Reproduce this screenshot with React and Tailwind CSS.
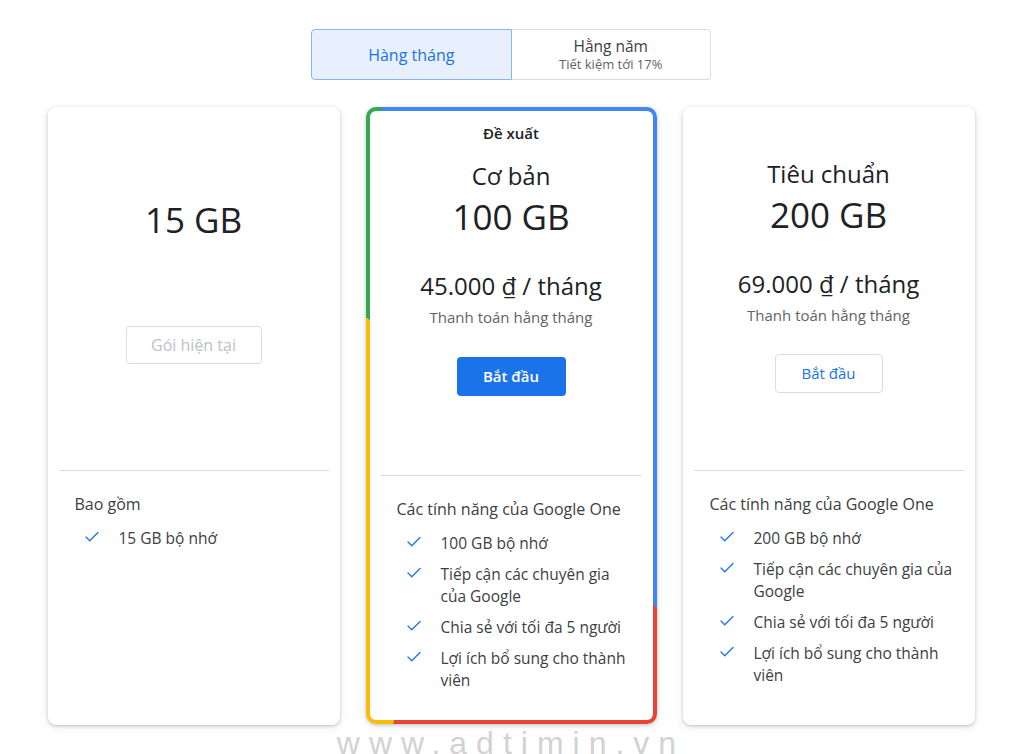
import React, { useState } from 'react'
import { Check } from 'lucide-react'

const plans = {
    basic: {
        name: 'Cơ bản',
        size: '100 GB',
        price: '45.000 ₫ / tháng',
        features: ['100 GB bộ nhớ', 'Tiếp cận các chuyên gia của Google', 'Chia sẻ với tối đa 5 người', 'Lợi ích bổ sung cho thành viên'],
    },
    standard: {
        name: 'Tiêu chuẩn',
        size: '200 GB',
        price: '69.000 ₫ / tháng',
        features: ['200 GB bộ nhớ', 'Tiếp cận các chuyên gia của Google', 'Chia sẻ với tối đa 5 người', 'Lợi ích bổ sung cho thành viên'],
    },
}

const FeatureList = ({ title, items }) => (
    <div className="border-t border-[#dadce0] pl-4 pr-[8px] pt-[23px]">
        <p className="text-[16px] leading-[20px] text-[#3c4043]">{title}</p>
        <ul className="mt-[13px] flex flex-col gap-[9px] pl-[8px]">
            {items.map((item, i) => (
                <li key={`f-${i}`} className="flex items-start gap-[18px]">
                    <Check size={18} strokeWidth={1.7} className="mt-[1px] shrink-0 text-[#1a73e8]" />
                    <span className="text-[15.5px] leading-[22px] text-[#3c4043]">{item}</span>
                </li>
            ))}
        </ul>
    </div>
)

const PlanTop = ({ plan, primary }) => (
    <>
        <h2 className="text-[24px] leading-[28px] text-[#202124]">{plan.name}</h2>
        <p className="mt-[5px] text-[35px] leading-[44px] text-[#202124]">{plan.size}</p>
        <p className="mt-[32px] text-[24px] leading-[30px] text-[#202124]">{plan.price}</p>
        <p className="mt-[6px] text-[15px] leading-[20px] text-[#5f6368]">Thanh toán hằng tháng</p>
        {primary ? (
            <button className="mt-[30px] h-[39px] w-[109px] rounded-[4px] bg-[#1a73e8] text-[15px] font-semibold text-white">
                Bắt đầu
            </button>
        ) : (
            <button className="mt-[29px] h-[39px] w-[108px] rounded-[4px] border border-[#dadce0] bg-white text-[15px] font-medium text-[#1a73e8]">
                Bắt đầu
            </button>
        )}
    </>
)

const cardShadow = 'shadow-[0_1px_3px_rgba(60,64,67,0.25),0_2px_8px_rgba(60,64,67,0.12)]'

const App = () => {
    const [period, setPeriod] = useState('month')

    return (
        <div className="min-h-screen bg-white font-['Open_Sans',sans-serif]">
            <div className="flex flex-col items-center pl-[6px] pt-[29px]">
                {/* period toggle */}
                <div className="flex h-[51px] w-[400px]">
                    <button
                        onClick={() => setPeriod('month')}
                        className={period === 'month'
                            ? 'flex-1 rounded-l-[4px] border border-[#8ab4f8] bg-[#e8f0fe] text-[16px] font-medium text-[#1a73e8]'
                            : 'flex-1 rounded-l-[4px] border border-[#dadce0] bg-white text-[16px] text-[#3c4043]'}
                    >
                        Hàng tháng
                    </button>
                    <button
                        onClick={() => setPeriod('year')}
                        className="flex flex-1 flex-col items-center justify-center rounded-r-[4px] border border-l-0 border-[#dadce0] bg-white"
                    >
                        <span className="text-[15.5px] leading-[19px] text-[#3c4043]">Hằng năm</span>
                        <span className="text-[13px] leading-[17px] text-[#5f6368]">Tiết kiệm tới 17%</span>
                    </button>
                </div>

                <div className="mt-[27px] flex items-start gap-[26px]">
                    {/* current plan */}
                    <div className={`flex h-[618px] w-[292px] flex-col rounded-[8px] bg-white px-[11px] ${cardShadow}`}>
                        <div className="flex h-[363px] flex-col items-center">
                            <p className="mt-[91px] text-[35px] leading-[44px] text-[#202124]">15 GB</p>
                            <button disabled className="mt-[84px] h-[38px] w-[136px] rounded-[4px] border border-[#dadce0] bg-white text-[16px] font-medium text-[#bdc1c6]">
                                Gói hiện tại
                            </button>
                        </div>
                        <FeatureList title="Bao gồm" items={['15 GB bộ nhớ']} />
                    </div>

                    {/* recommended plan */}
                    <div className={`h-[617px] w-[291px] rounded-[10px] bg-[conic-gradient(#4285f4_0deg_143deg,#ea4335_143deg_201deg,#fbbc04_201deg_304deg,#34a853_304deg_337deg,#4285f4_337deg_360deg)] p-[4px] ${cardShadow}`}>
                        <div className="flex h-full flex-col rounded-[6px] bg-white px-[11px]">
                            <div className="flex h-[364px] flex-col items-center pt-[12px]">
                                <p className="mb-[19px] text-[15px] font-semibold leading-[20px] text-[#202124]">Đề xuất</p>
                                <PlanTop plan={plans.basic} primary />
                            </div>
                            <FeatureList title="Các tính năng của Google One" items={plans.basic.features} />
                        </div>
                    </div>

                    {/* standard plan */}
                    <div className={`flex h-[618px] w-[292px] flex-col rounded-[8px] bg-white px-[11px] ${cardShadow}`}>
                        <div className="flex h-[363px] flex-col items-center pt-[53px]">
                            <PlanTop plan={plans.standard} />
                        </div>
                        <FeatureList title="Các tính năng của Google One" items={plans.standard.features} />
                    </div>
                </div>

                <p className="mt-[2px] font-['Liberation_Sans',sans-serif] text-[32px] leading-[32px] tracking-[9px] text-[#d2d2d2]">
                    www.adtimin.vn
                </p>
            </div>
        </div>
    )
}

export default App
